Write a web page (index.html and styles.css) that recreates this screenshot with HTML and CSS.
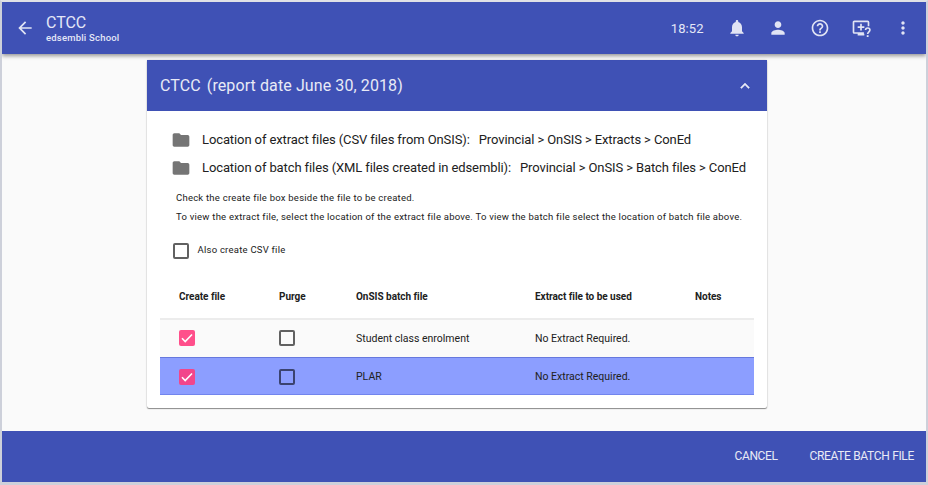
FILE: index.html
```html
<!DOCTYPE html>
<html lang="en">
<head>
<meta charset="utf-8">
<title>CTCC</title>
<link rel="stylesheet" href="styles.css">
</head>
<body>
<div class="window">
  <header class="topbar">
    <svg class="icon back" viewBox="0 0 24 24"><path d="M20 11H7.83l5.59-5.59L12 4l-8 8 8 8 1.41-1.41L7.83 13H20v-2z"/></svg>
    <div class="titles">
      <h1>CTCC</h1>
      <p>edsembli School</p>
    </div>
    <span class="clock">18:52</span>
    <nav class="actions">
      <svg class="icon" viewBox="0 0 24 24"><path d="M12 22c1.1 0 2-.9 2-2h-4c0 1.1.89 2 2 2zm6-6v-5c0-3.07-1.64-5.64-4.5-6.32V4c0-.83-.67-1.5-1.5-1.5s-1.5.67-1.5 1.5v.68C7.63 5.36 6 7.92 6 11v5l-2 2v1h16v-1l-2-2z"/></svg>
      <svg class="icon" viewBox="0 0 24 24"><path d="M12 12c2.21 0 4-1.79 4-4s-1.79-4-4-4-4 1.79-4 4 1.79 4 4 4zm0 2c-2.67 0-8 1.34-8 4v2h16v-2c0-2.66-5.33-4-8-4z"/></svg>
      <svg class="icon" viewBox="0 0 24 24"><path d="M11 18h2v-2h-2v2zm1-16C6.48 2 2 6.48 2 12s4.48 10 10 10 10-4.48 10-10S17.520 2 12 2zm0 18c-4.410 0-8-3.590-8-8s3.590-8 8-8 8 3.590 8 8-3.590 8-8 8zm0-14c-2.210 0-4 1.790-4 4h2c0-1.100.9-2 2-2s2 .9 2 2c0 2-3 1.750-3 5h2c0-2.250 3-2.500 3-5 0-2.210-1.790-4-4-4z"/></svg>
      <svg class="icon screen" viewBox="0 0 24 24"><path d="M15.500 18v1H16v2H8v-2H4a2 2 0 0 1-2-2V5c0-1.100.9-2 2-2h16a2 2 0 0 1 2 2v5h-2V5H4v12h11.500zM11 7h2v3h3v2h-3v3h-2v-3H8v-2h3z"/><path class="stroke" d="M17.500 14.500c0-3.400 5.200-3.400 5.200 0 0 2-2.700 2.200-2.700 4.800"/><path d="M18.900 20.600h2.200v2.200h-2.200z"/></svg>
      <svg class="icon" viewBox="0 0 24 24"><path d="M12 8c1.100 0 2-.9 2-2s-.9-2-2-2-2 .9-2 2 .9 2 2 2zm0 2c-1.100 0-2 .9-2 2s.9 2 2 2 2-.9 2-2-.9-2-2-2zm0 6c-1.100 0-2 .9-2 2s.9 2 2 2 2-.9 2-2-.9-2-2-2z"/></svg>
    </nav>
  </header>

  <main>
    <section class="card">
      <div class="card-head">
        <h2>CTCC <span>(report date June 30, 2018)</span></h2>
        <svg class="chevron" viewBox="0 0 24 24"><path d="M12 8l-6 6 1.410 1.410L12 10.830l4.590 4.580L18 14z"/></svg>
      </div>
      <div class="card-body">
        <ul class="locations">
          <li><svg viewBox="0 0 24 24"><path d="M10 4H4c-1.100 0-1.990.9-1.990 2L2 18c0 1.100.9 2 2 2h16c1.100 0 2-.9 2-2V8c0-1.100-.9-2-2-2h-8l-2-2z"/></svg><span class="label">Location of extract files (CSV files from OnSIS):</span><span>Provincial &gt; OnSIS &gt; Extracts &gt; ConEd</span></li>
          <li><svg viewBox="0 0 24 24"><path d="M10 4H4c-1.100 0-1.990.9-1.990 2L2 18c0 1.100.9 2 2 2h16c1.100 0 2-.9 2-2V8c0-1.100-.9-2-2-2h-8l-2-2z"/></svg><span class="label">Location of batch files (XML files created in edsembli):</span><span>Provincial &gt; OnSIS &gt; Batch files &gt; ConEd</span></li>
        </ul>
        <div class="help">
          <p>Check the create file box beside the file to be created.</p>
          <p>To view the extract file, select the location of the extract file above. To view the batch file select the location of batch file above.</p>
        </div>
        <div class="option"><i class="box"></i><span>Also create CSV file</span></div>
        <table>
          <colgroup><col class="c1"><col class="c2"><col class="c3"><col class="c4"><col class="c5"></colgroup>
          <thead><tr><th>Create file</th><th>Purge</th><th>OnSIS batch file</th><th>Extract file to be used</th><th>Notes</th></tr></thead>
          <tbody>
            <tr>
              <td><i class="box checked"><svg viewBox="0 0 16 16"><path d="M3 8.300 6.200 11.500 13 4.500"/></svg></i></td>
              <td><i class="box"></i></td><td>Student class enrolment</td><td>No Extract Required.</td><td></td>
            </tr>
            <tr class="selected">
              <td><i class="box checked"><svg viewBox="0 0 16 16"><path d="M3 8.300 6.200 11.500 13 4.500"/></svg></i></td>
              <td><i class="box"></i></td><td>PLAR</td><td>No Extract Required.</td><td></td>
            </tr>
          </tbody>
        </table>
      </div>
    </section>
  </main>

  <footer>
    <span class="cancel">CANCEL</span>
    <span class="create">CREATE BATCH FILE</span>
  </footer>
</div>
</body>
</html>
```
FILE: styles.css
```css
* { box-sizing: border-box; }
body { margin: 0; font-family: Roboto, "Liberation Sans", sans-serif; color: #212121; }
h1, h2, p, ul { margin: 0; padding: 0; font-weight: 400; list-style: none; }
svg { display: block; flex: none; }
.window {
  width: 928px; height: 485px; display: flex; flex-direction: column; overflow: hidden;
  background: #fafafa; border: 2px solid #cdd0da; border-bottom-width: 3px; border-top-color: #e0e1e6;
}
.topbar {
  height: 52px; flex: none; display: flex; align-items: center; padding: 0 13px;
  background: #3f51b5; color: #e4e7f7; box-shadow: 0 2px 4px rgba(0,0,0,.4); position: relative;
}
.icon { width: 20px; height: 20px; fill: #e1e4f4; }
.screen { overflow: visible; }
.stroke { fill: none; stroke: #e1e4f4; stroke-width: 2; }
.titles { margin-left: 11px; flex: 1; padding-top: 1px; }
.titles h1 { font-size: 16px; line-height: 17px; letter-spacing: -.05px; }
.titles p { font-size: 9.500px; font-weight: 500; line-height: 13px; letter-spacing: .2px; }
.clock { font-size: 13px; letter-spacing: .1px; margin-right: 23px; }
.actions { display: flex; gap: 21.600px; }
main { flex: 1; padding: 6px 0 0 145px; }
.card { width: 620px; height: 348px; background: #fff; border-radius: 2px; box-shadow: 0 1px 1px rgba(0,0,0,.42), 0 0 2px rgba(0,0,0,.2); }
.card-head { height: 51px; background: #3f51b5; color: #e8eaf6; display: flex; align-items: center; justify-content: space-between; padding: 0 13px; }
.card-head h2 { font-size: 16px; letter-spacing: .1px; }
.card-head span { margin-left: 2px; }
.chevron { width: 18px; height: 18px; fill: #e8eaf6; stroke: #e8eaf6; stroke-width: .6; }
.card-body { padding: 15px 13px 0; }
.locations li { height: 28px; display: flex; align-items: center; padding-left: 11px; font-size: 13px; letter-spacing: -.105px; white-space: nowrap; }
.locations li span { padding-bottom: 1px; }
.locations svg { width: 20px; height: 20px; fill: #757575; margin-right: 11px; }
.locations .label { margin-right: 9px; }
.help { margin: 6px 0 0 16px; font-size: 9.500px; line-height: 19px; letter-spacing: .235px; white-space: nowrap; }
.option { display: flex; align-items: center; margin: 17px 0 0 13px; height: 16px; font-size: 9.500px; letter-spacing: .24px; gap: 8.500px; }
.option span { margin-top: -3px; }
.box { display: block; width: 16px; height: 16px; border: 2px solid #616161; border-radius: 2px; background: transparent; flex: none; }
.checked { border: 0; background: #ff4f8b; }
.checked path { fill: none; stroke: #fff; stroke-width: 1.600; }
table { width: 594px; margin-top: 14px; table-layout: fixed; border-collapse: separate; border-spacing: 0; font-size: 10.500px; }
.c1 { width: 119px; } .c2 { width: 77px; } .c3 { width: 179px; } .c4 { width: 160px; } .c5 { width: 59px; }
th, td { padding: 0; text-align: left; white-space: nowrap; }
th:first-child, td:first-child { padding-left: 19px; }
th { height: 45px; padding-top: 1px; font-size: 10px; font-weight: 700; letter-spacing: -.03px; }
tbody td { height: 39px; padding-bottom: 1px; background: #fafafa; border-top: 2px solid #ececec; }
.selected td { height: 38px; padding-top: 1px; padding-bottom: 0; background: #8c9eff; border-top: 1px solid #6678dd; border-bottom: 1px solid #7285ed; }
.selected .box { border-color: #3b4370; }
.selected .checked { background: #f2468b; }
footer { height: 51px; flex: none; display: flex; justify-content: flex-end; align-items: center; gap: 32px; padding: 0 12px 2px 0; background: #3f51b5; color: #e8eaf6; font-size: 12px; letter-spacing: -.33px; }
.cancel { letter-spacing: -.4px; }
```
